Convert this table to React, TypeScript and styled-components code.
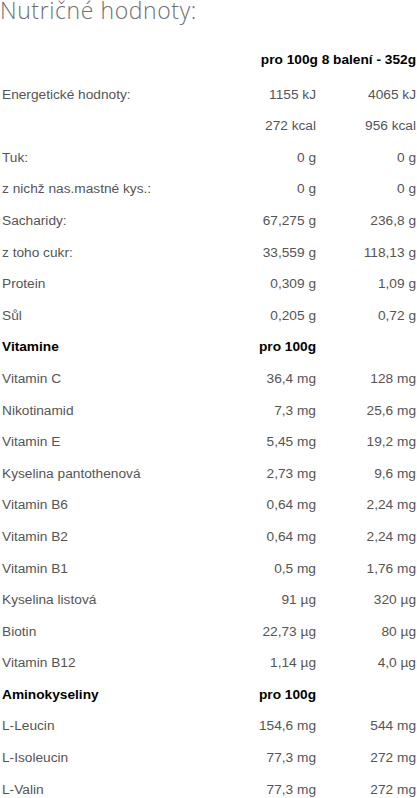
import styled, { createGlobalStyle } from "styled-components";

interface Row {
  label: string;
  per100?: string;
  perPack?: string;
  head?: boolean;
}

const rows: Row[] = [
  { label: "Energetické hodnoty:", per100: "1155 kJ", perPack: "4065 kJ" },
  { label: "", per100: "272 kcal", perPack: "956 kcal" },
  { label: "Tuk:", per100: "0 g", perPack: "0 g" },
  { label: "z nichž nas.mastné kys.:", per100: "0 g", perPack: "0 g" },
  { label: "Sacharidy:", per100: "67,275 g", perPack: "236,8 g" },
  { label: "z toho cukr:", per100: "33,559 g", perPack: "118,13 g" },
  { label: "Protein", per100: "0,309 g", perPack: "1,09 g" },
  { label: "Sůl", per100: "0,205 g", perPack: "0,72 g" },
  { label: "Vitamine", per100: "pro 100g", head: true },
  { label: "Vitamin C", per100: "36,4 mg", perPack: "128 mg" },
  { label: "Nikotinamid", per100: "7,3 mg", perPack: "25,6 mg" },
  { label: "Vitamin E", per100: "5,45 mg", perPack: "19,2 mg" },
  { label: "Kyselina pantothenová", per100: "2,73 mg", perPack: "9,6 mg" },
  { label: "Vitamin B6", per100: "0,64 mg", perPack: "2,24 mg" },
  { label: "Vitamin B2", per100: "0,64 mg", perPack: "2,24 mg" },
  { label: "Vitamin B1", per100: "0,5 mg", perPack: "1,76 mg" },
  { label: "Kyselina listová", per100: "91 µg", perPack: "320 µg" },
  { label: "Biotin", per100: "22,73 µg", perPack: "80 µg" },
  { label: "Vitamin B12", per100: "1,14 µg", perPack: "4,0 µg" },
  { label: "Aminokyseliny", per100: "pro 100g", head: true },
  { label: "L-Leucin", per100: "154,6 mg", perPack: "544 mg" },
  { label: "L-Isoleucin", per100: "77,3 mg", perPack: "272 mg" },
  { label: "L-Valin", per100: "77,3 mg", perPack: "272 mg" },
];

const App = () => {
  return (
    <>
      <GlobalStyle />
      <Wrapper>
        <Title>Nutričné hodnoty:</Title>
        <Table>
          <colgroup>
            <col />
            <col style={{ width: 96 }} />
            <col style={{ width: 100 }} />
          </colgroup>
          <thead>
            <tr>
              <HeadCell />
              <HeadCell $right $span>
                pro 100g 8 balení - 352g
              </HeadCell>
            </tr>
          </thead>
          <tbody>
            {rows.map((row, i) => (
              <tr key={i}>
                <Cell $bold={row.head}>{row.label}</Cell>
                <Cell $right $bold={row.head}>
                  {row.per100}
                </Cell>
                <Cell $right>{row.perPack}</Cell>
              </tr>
            ))}
          </tbody>
        </Table>
      </Wrapper>
    </>
  );
};

export default App;

const GlobalStyle = createGlobalStyle`
  body {
    margin: 0;
    background: #fff;
    font-family: "Liberation Sans", Arial, sans-serif;
  }
`;

const Wrapper = styled.div`
  width: 417px;
  overflow: hidden;
`;

const Title = styled.h2`
  margin: -4px 0 0 0;
  font-family: "Open Sans", "Noto Sans", sans-serif;
  font-weight: 300;
  font-size: 23px;
  line-height: 28px;
  color: #707070;
  letter-spacing: 0.6px;
`;

const Table = styled.table`
  width: 100%;
  margin-top: 20px;
  border-collapse: collapse;
  table-layout: fixed;
  font-size: 13.7px;
  line-height: 19.6px;
`;

const HeadCell = styled.th.attrs<{ $span?: boolean }>((p) => ({
  colSpan: p.$span ? 2 : 1,
}))<{ $right?: boolean; $span?: boolean }>`
  padding: 6px 1px 9px 2px;
  text-align: ${(p) => (p.$right ? "right" : "left")};
  font-weight: 700;
  color: #000;
  white-space: nowrap;
`;

const Cell = styled.td<{ $right?: boolean; $bold?: boolean }>`
  padding: 6px 1px 6px 2px;
  text-align: ${(p) => (p.$right ? "right" : "left")};
  font-weight: ${(p) => (p.$bold ? 700 : 400)};
  color: ${(p) => (p.$bold ? "#000" : "#555")};
  white-space: nowrap;
`;
